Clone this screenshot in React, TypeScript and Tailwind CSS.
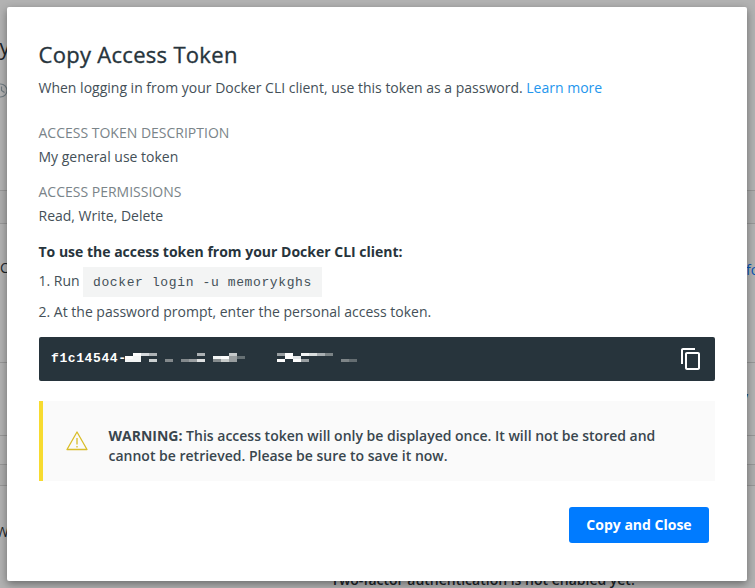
const blocks: [number, number, string][] = [
  [1, 0, '#fdfdfd'], [2, 0, '#d5d9dc'], [3, 0, '#aeb3b6'], [9, 0, '#acb1b4'],
  [0, 1, '#fdfdfd'], [1, 1, '#f3f5f5'],
  [0, 2, '#f3f5f5'], [1, 2, '#f3f5f5'], [3, 2, '#cbd0d1'], [5, 2, '#83898c'], [7, 2, '#83898c'], [8, 2, '#9a9fa2'], [9, 2, '#dfe1e2'],
  [13, 0, '#c5c9ca'], [11, 1, '#f3f5f5'], [12, 1, '#fdfdfd'], [13, 1, '#989d9f'], [14, 1, '#667074'],
  [11, 2, '#868c8e'], [12, 2, '#c7cbca'], [13, 2, '#989d9f'],
  [19, 0, '#989ea1'], [20, 0, '#fdfdfd'], [22, 0, '#f3f5f5'], [23, 0, '#d9dddd'], [24, 0, '#a9afb2'], [25, 0, '#7b8386'],
  [20, 1, '#fdfdfd'], [21, 1, '#e2e5e7'],
  [19, 2, '#fdfdfd'], [21, 2, '#fdfdfd'], [22, 2, '#989ea1'],
  [27, 2, '#7d8487'], [28, 2, '#646d71'],
];

function Backdrop() {
  return (
    <div className="h-full w-full text-[14px] leading-5 text-[#1b2429]">
      <div className="relative h-[190px]">
        <span className="absolute top-[33px] -left-[9px] text-[21px] leading-7 font-medium">ry</span>
        <svg className="absolute top-[83px] -left-[7px]" width="15" height="15" viewBox="0 0 15 15" fill="none" stroke="#6f7a80" strokeWidth="1.2">
          <circle cx="7.5" cy="7.5" r="6.5" />
          <path d="M8.5 3.5v4l3 2" />
        </svg>
      </div>
      <div className="h-[34px] border-y border-[#979797] bg-[#adadad]" />
      <div className="relative h-[139px] border-b border-[#979797]">
        <span className="absolute top-[34px] left-0">C</span>
        <span className="absolute top-[36px] left-[746px] text-[#0b54b5]">fo</span>
      </div>
      <div className="relative h-[73px] border-b border-[#979797]">
        <span className="absolute top-[24px] left-[741px] text-[#07355f]">y</span>
      </div>
      <div className="h-[29px] border-b border-[#979797]" />
      <div className="h-[21px] border-b border-[#979797] bg-[#adadad]" />
      <div className="relative h-[102px]">
        <span className="absolute top-[36px] -left-[4px]">W</span>
        <span className="absolute top-[84px] left-[331px] font-semibold whitespace-nowrap">Two-factor authentication is not enabled yet.</span>
      </div>
    </div>
  );
}

export default function App() {
  return (
    <div className="relative h-[588px] w-[755px] overflow-hidden bg-[#b2b2b2] font-['Open_Sans',sans-serif]">
      <Backdrop />
      <div className="absolute top-[7px] left-[7px] h-[574px] w-[740px] rounded-[2px] bg-white px-8 pt-[31px] text-[14px] leading-5 text-[#445058] shadow-[0_3px_8px_rgba(0,0,0,0.4)]">
        <h1 className="-ml-[0.5px] h-8 text-[22px] leading-8 font-medium tracking-[0.3px] text-[#27343c] [-webkit-text-stroke:0.35px_#27343c]">Copy Access Token</h1>
        <p className="mt-2 -ml-[0.5px]">
          When logging in from your Docker CLI client, use this token as a password.{' '}
          <a className="text-[#2496ed]">Learn more</a>
        </p>
        <div className="mt-[25px] -ml-[0.5px] text-[#7a8489]">ACCESS TOKEN DESCRIPTION</div>
        <div className="mt-1 -ml-[0.5px]">My general use token</div>
        <div className="mt-[15px] -ml-[0.5px] text-[#7a8489]">ACCESS PERMISSIONS</div>
        <div className="mt-1 -ml-[0.5px]">Read, Write, Delete</div>
        <div className="mt-4 -ml-[0.5px] font-bold text-[#27343c]">To use the access token from your Docker CLI client:</div>
        <div className="mt-[5px] flex h-[30px]">
          <span className="mt-1 -ml-[0.5px] w-[44.5px]">1. Run</span>
          <code className="h-[30px] w-[239px] bg-[#f3f4f4] pl-[10px] font-['Liberation_Mono',monospace] text-[13px] leading-[31px] tracking-[0.62px] whitespace-nowrap">docker login -u memorykghs</code>
        </div>
        <div className="mt-[5px] -ml-[0.5px]">2. At the password prompt, enter the personal access token.</div>
        <div className="mt-[15px] flex h-11 w-[676px] items-center rounded-[2px] bg-[#27343c] pl-3 text-white">
          <span className="w-[74px] font-['Liberation_Mono',monospace] text-[13px] font-bold tracking-[0.6px] whitespace-nowrap">f1c14544-</span>
          <svg width="232" height="9" viewBox="0 0 232 9" shapeRendering="crispEdges" className="mb-[3px]">
            {blocks.map(([x, y, color]) => (
              <rect key={`${x}-${y}`} x={x * 8} y={y * 3} width="8" height="3" fill={color} />
            ))}
          </svg>
          <svg className="mr-3 ml-auto" width="24" height="24" viewBox="0 0 24 24" fill="currentColor">
            <path d="M16 1H4c-1.1 0-2 .9-2 2v14h2V3h12V1zm3 4H8c-1.1 0-2 .9-2 2v14c0 1.1.9 2 2 2h11c1.1 0 2-.9 2-2V7c0-1.1-.9-2-2-2zm0 16H8V7h11v14z" />
          </svg>
        </div>
        <div className="mt-5 flex h-20 w-[676px] items-center border-l-4 border-[#f7db2f] bg-[#fafafa] pl-[23px] font-semibold text-[#39464e]">
          <svg width="22" height="20" viewBox="0 0 22 20" fill="none" stroke="#d9bd28" strokeWidth="1.3">
            <path d="M11 1 21 18.5H1Z" strokeLinejoin="round" />
            <path d="M11 7v6.5M11 15v1.5" />
          </svg>
          <p className="ml-[20.5px] pt-[10px] pb-[1px]">
            <strong className="font-bold">WARNING:</strong> This access token will only be displayed once. It will not be stored and<br />cannot be retrieved. Please be sure to save it now.
          </p>
        </div>
        <div className="mt-[26px] mr-[6px] flex justify-end">
          <button className="h-9 w-[140px] rounded-[3px] bg-[#007bff] font-bold text-white">Copy and Close</button>
        </div>
      </div>
    </div>
  );
}
